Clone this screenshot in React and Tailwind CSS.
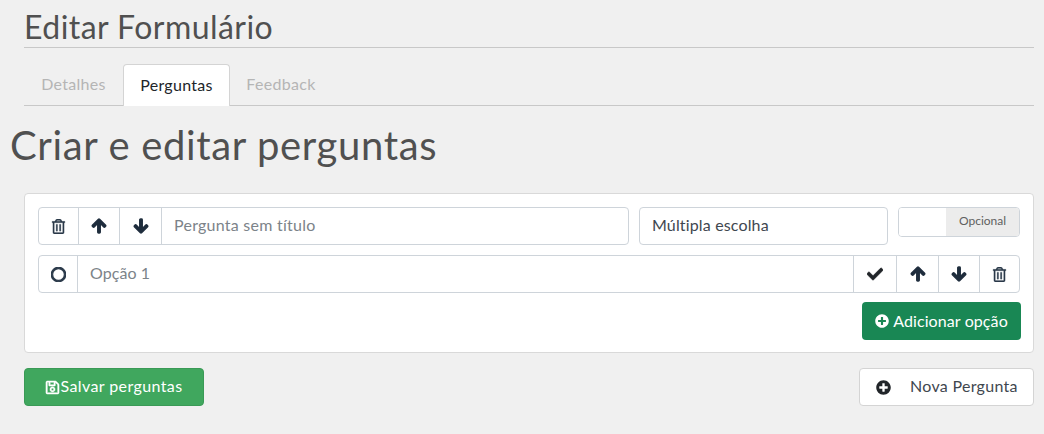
import React from 'react';
import { FaArrowUp, FaArrowDown, FaCheck, FaPlusCircle, FaRegSave, FaRegCircle, FaRegTrashAlt } from 'react-icons/fa';

const IconCell = ({ children, className = '' }) => (
  <button className={`flex items-center justify-center border-r border-[#ced4da] last:border-r-0 text-[#212529] text-[16px] ${className}`}>
    {children}
  </button>
);

// the reference icons render heavier than the plain glyphs, so they get a stroke on top
const TrashIcon = () => <FaRegTrashAlt className="text-[15px] text-[#2b3a4a]" stroke="currentColor" strokeWidth={8} />;
const UpIcon = () => <FaArrowUp className="text-[#1f2d3d]" stroke="currentColor" strokeWidth={45} />;
const DownIcon = () => <FaArrowDown className="text-[#1f2d3d]" stroke="currentColor" strokeWidth={45} />;

const App = () => {
  return (
    <div className="min-h-[434px] bg-[#f0f0f0] pt-[7px] text-[#212529] font-['Lato','Noto_Sans',sans-serif]">
      {/* Page title */}
      <div className="ml-6 mr-2.5 h-[41px] border-b border-[#c8c8c8]">
        <h2 className="text-[32px] leading-[40px] text-[#505050] tracking-[0.45px]">Editar Formulário</h2>
      </div>

      {/* Tabs */}
      <div className="ml-6 mr-2.5 mt-4 flex h-[42px] border-b border-[#c8c8c8] text-[16px] tracking-[0.3px]">
        <button className="w-[99px] pb-0.5 text-center text-[#b5b5b5]">Detalhes</button>
        <button className="-mb-px w-[107px] rounded-t border border-b-0 border-[#d4d4d4] bg-white pb-0.5 text-center text-[#212529]">Perguntas</button>
        <button className="w-[102px] pb-0.5 text-center text-[#b5b5b5]">Feedback</button>
      </div>

      <h1 className="ml-2.5 mt-[15px] h-[48px] text-[40px] leading-[48px] text-[#505050] tracking-[0.65px]">Criar e editar perguntas</h1>

      {/* Question card */}
      <div className="ml-6 mr-2.5 mt-6 h-[160px] rounded border border-[#d9d9d9] bg-white px-[13px] pt-[13px]">
        <div className="flex items-start gap-2.5">
          <div className="flex h-[38px] w-[591px] rounded border border-[#ced4da]">
            <IconCell className="w-[40px]"><TrashIcon /></IconCell>
            <IconCell className="w-[41px]"><UpIcon /></IconCell>
            <IconCell className="w-[42px]"><DownIcon /></IconCell>
            <div className="flex flex-1 items-center pb-0.5 pl-3 text-[16px] tracking-[0.25px] text-[#7c8389]">Pergunta sem título</div>
          </div>
          <div className="flex h-[38px] w-[249px] items-center rounded border border-[#ced4da] pb-0.5 pl-3 text-[16px] tracking-[0.15px] text-[#3f474f]">Múltipla escolha</div>
          <div className="flex h-[30px] w-[122px] overflow-hidden rounded border border-[#ced4da]">
            <div className="w-[47px] bg-white"></div>
            <div className="flex flex-1 items-center justify-center bg-[#ececec] pb-0.5 text-[12px] text-[#606060]">Opcional</div>
          </div>
        </div>

        <div className="mt-2.5 flex h-[38px] w-[982px] rounded border border-[#ced4da]">
          <IconCell className="w-[39px]"><FaRegCircle className="text-[15px] text-[#2b3a4a]" stroke="currentColor" strokeWidth={40} /></IconCell>
          <div className="flex flex-1 items-center pb-0.5 pl-3 text-[16px] tracking-[0.05px] text-[#7c8389]">Opção 1</div>
          <div className="flex border-l border-[#ced4da]">
            <IconCell className="w-[43px]"><FaCheck className="text-[#212529]" stroke="currentColor" strokeWidth={25} /></IconCell>
            <IconCell className="w-[42px]"><UpIcon /></IconCell>
            <IconCell className="w-[41px]"><DownIcon /></IconCell>
            <IconCell className="w-[39px]"><TrashIcon /></IconCell>
          </div>
        </div>

        <div className="mt-[9px] flex justify-end">
          <button className="-mr-px flex h-[38px] w-[159px] items-center justify-center gap-1 rounded bg-[#198754] text-[16px] tracking-[0.1px] text-white">
            <FaPlusCircle className="text-[14px]" />
            Adicionar opção
          </button>
        </div>
      </div>

      {/* Footer actions */}
      <div className="ml-6 mr-2.5 mt-[15px] flex items-center justify-between">
        <button className="flex h-[38px] w-[180px] items-center justify-center rounded border border-[#3a9a56] bg-[#40a75e] pb-0.5 text-[16px] tracking-[0.4px] text-white">
          <FaRegSave className="mt-0.5 text-[15px]" stroke="currentColor" strokeWidth={15} />
          Salvar perguntas
        </button>
        <button className="flex h-[38px] w-[175px] items-center rounded border border-[#d4d4d4] bg-white pb-0.5 pl-4 text-[16px] tracking-[0.3px] text-[#3f474f]">
          <FaPlusCircle className="mt-0.5 text-[15px] text-[#212529]" />
          <span className="ml-[19px]">Nova Pergunta</span>
        </button>
      </div>
    </div>
  );
};

export default App;
